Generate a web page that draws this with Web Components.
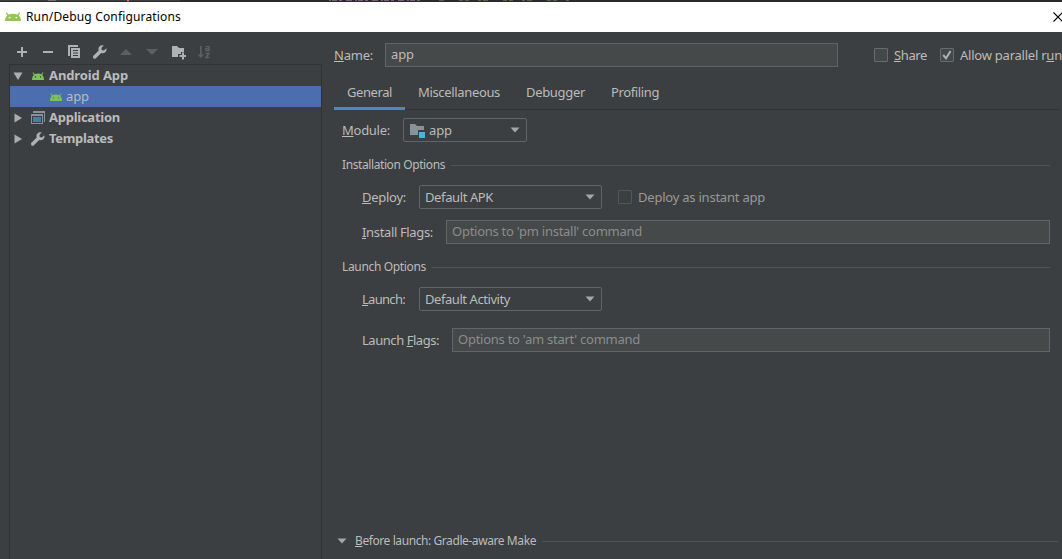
<!DOCTYPE html>
<html lang="en">
<head>
<meta charset="utf-8">
<title>Run/Debug Configurations</title>
<style>
  body {
    margin: 0;
    width: 1062px;
    height: 559px;
    overflow: hidden;
    background: #3c3f41;
    color: #bbbbbb;
    font: 13px/18px "Noto Sans", "Open Sans", sans-serif;
  }
</style>
</head>
<body>
<run-dialog></run-dialog>

<script>
const ICONS = {
  android: [16, 10, `<path d="M0 10C0 7.300 .8 5.200 2.400 3.800L.8.900 1.700.300 3.600 2.800C5 2.100 6.500 1.900 8 1.900S11 2.100 12.400 2.800L14.300.300 15.200.900 13.600 3.800C15.200 5.200 16 7.300 16 10Z" fill="var(--droid,#7bc257)"/><rect x="3.800" y="5.400" width="1.600" height="1.600" fill="var(--eye,#3c3f41)"/><rect x="10.600" y="5.400" width="1.600" height="1.600" fill="var(--eye,#3c3f41)"/>`],
  add: [16, 16, `<path d="M7 3h2v4h4v2H9v4H7V9H3V7h4z" fill="#afb1b3"/>`],
  remove: [16, 16, `<path d="M3 7h10v2H3z" fill="#afb1b3"/>`],
  copy: [16, 16, `<path d="M2 1h10v2H4v9H2z" fill="#afb1b3"/><path d="M5 4h9v10H5zM7 6v1h5V6zm0 2.500v1h5v-1zM7 11v1h5v-1z" fill="#afb1b3" fill-rule="evenodd"/>`],
  wrench: [16, 16, `<path d="M14.300 4.200 11.900 6.500 9.800 6.100 9.400 4 11.700 1.600C10.200 1 8.500 1.400 7.500 2.500 6.400 3.500 6.200 5.100 6.700 6.500L1.400 11.800C.8 12.500.8 13.500 1.400 14.200 2.100 14.900 3.200 14.900 3.900 14.200L9.200 9C10.600 9.600 12.200 9.300 13.300 8.200 14.500 7.100 14.800 5.600 14.300 4.200Z" fill="#afb1b3"/>`],
  up: [16, 16, `<path d="M8 5l6 6H2z" fill="#5e6060"/>`],
  down: [16, 16, `<path d="M2 5h12l-6 6z" fill="#5e6060"/>`],
  folderAdd: [16, 16, `<path d="M2 2h5l2 2h5v4h-3v2H8v3H2z" fill="#afb1b3"/><path d="M12 8.500h2v2.500h2v2h-2v2.500h-2V13H9.500v-2H12z" fill="#afb1b3"/>`],
  sort: [16, 16, `<path d="M4 2h1.600v8.500H8L4.800 14 1.600 10.500H4z" fill="#5e6060"/><path d="M9.700 2.700h3.300v4H9.900V4.700H13M9.500 9.500H13L9.900 13.500h3.500" fill="none" stroke="#5e6060" stroke-width="1.300"/>`],
  window: [16, 16, `<path d="M3 1h12v11h-1V3H3z" fill="#87939a"/><path d="M1 4h12v10H1zM2 6v7h10V6z" fill="#87939a" fill-rule="evenodd"/><path d="M3 7h8v5H3z" fill="#3e86a0"/>`],
  module: [16, 16, `<path d="M1 2h5l2 2h7v4H9v5H1z" fill="#87939a"/><path d="M10 10h6v6h-6z" fill="#40b6e0"/>`],
  arrowDown: [10, 6, `<path d="M.5.500h9L5 5.500z" fill="#a4a6a8"/>`],
  expanded: [10, 8, `<path d="M.5.500h9L5 8z" fill="#adadad"/>`],
  collapsed: [8, 10, `<path d="M.5.500 8 5 .5 9.500z" fill="#adadad"/>`],
  check: [14, 14, `<path d="M3.200 7 6 10.300 10.600 3" fill="none" stroke="#afb1b3" stroke-width="2"/>`],
  close: [10, 10, `<path d="M.5.500l9 9M9.500.500l-9 9" fill="none" stroke="#000" stroke-width="1.100"/>`]
};

class UiIcon extends HTMLElement {
  connectedCallback() {
    const [w, h, body] = ICONS[this.getAttribute("name")];
    const width = this.getAttribute("w") || w;
    const height = this.getAttribute("h") || h;
    this.attachShadow({ mode: "open" }).innerHTML = `
      <style>
        :host { display: block; flex: none; }
        svg { display: block; }
      </style>
      <svg width="${width}" height="${height}" viewBox="0 0 ${w} ${h}" preserveAspectRatio="none">${body}</svg>
    `;
  }
}

// Text that is tracked to take up a given width
class UiText extends HTMLElement {
  connectedCallback() {
    this.attachShadow({ mode: "open" }).innerHTML = `
      <style>
        :host { display: block; flex: none; white-space: nowrap; }
        span { display: inline-block; }
      </style>
      <span><slot></slot></span>
    `;
    const target = Number(this.getAttribute("w"));
    const span = this.shadowRoot.querySelector("span");
    const natural = span.getBoundingClientRect().width;
    if (target && natural) {
      span.style.letterSpacing = `${(target - natural) / this.textContent.length}px`;
      this.style.width = `${target}px`;
    }
  }
}

class UiField extends HTMLElement {
  constructor() {
    super();
    this.attachShadow({ mode: "open" }).innerHTML = `
      <style>
        :host {
          display: flex;
          align-items: center;
          box-sizing: border-box;
          height: 24px;
          padding: 0 5px 2px;
          background: #45494a;
          border: 1px solid #646464;
        }
        :host([hint]) { color: #8c8c8c; }
      </style>
      <slot></slot>
    `;
  }
}

class UiCombo extends HTMLElement {
  constructor() {
    super();
    this.attachShadow({ mode: "open" }).innerHTML = `
      <style>
        :host {
          display: flex;
          align-items: center;
          justify-content: space-between;
          box-sizing: border-box;
          flex: none;
          height: 24px;
          padding: 0 6px 0 5px;
          border: 1px solid #646464;
          border-radius: 2px;
        }
        div { display: flex; align-items: center; gap: 4px; padding-bottom: 1px; }
      </style>
      <div><slot></slot></div>
      <ui-icon name="arrowDown"></ui-icon>
    `;
  }
}

class UiCheckbox extends HTMLElement {
  connectedCallback() {
    this.attachShadow({ mode: "open" }).innerHTML = `
      <style>
        :host { display: flex; align-items: center; flex: none; gap: 6px; }
        .box {
          box-sizing: border-box;
          width: 14px;
          height: 14px;
          background: #43494a;
          border: 1px solid #6b6b6b;
          border-radius: 1px;
        }
        .box ui-icon { margin: -1px; }
        :host([disabled]) { color: #999999; }
        :host([disabled]) .box { background: none; border-color: #545556; }
      </style>
      <div class="box">${this.hasAttribute("checked") ? '<ui-icon name="check"></ui-icon>' : ""}</div>
      <div class="label"><slot></slot></div>
    `;
  }
}

class SectionTitle extends HTMLElement {
  constructor() {
    super();
    this.attachShadow({ mode: "open" }).innerHTML = `
      <style>
        :host { display: flex; align-items: center; gap: 6px; height: 18px; font-size: 12px; }
        .line { flex: 1; height: 1px; background: #515355; }
      </style>
      <slot></slot>
      <div class="line"></div>
    `;
  }
}

class TreeRow extends HTMLElement {
  connectedCallback() {
    this.attachShadow({ mode: "open" }).innerHTML = `
      <style>
        :host { display: flex; align-items: center; height: 21px; font-weight: bold; }
        :host([selected]) { background: #4b6eaf; font-weight: normal; --eye: #4b6eaf; }
        .arrow { display: flex; justify-content: center; width: 16px; flex: none; }
        .icon { display: flex; justify-content: center; width: 16px; margin: 0 3px 0 4px; }
        .label { padding-bottom: 2px; }
        :host([selected]) .icon { margin: 0 1px 0 22px; }
        :host([selected]) .label { padding: 0 0 1px 1px; }
      </style>
      <div class="arrow"><slot name="arrow"></slot></div>
      <div class="icon"><slot name="icon"></slot></div>
      <div class="label"><slot></slot></div>
    `;
  }
}

class TitleBar extends HTMLElement {
  constructor() {
    super();
    this.attachShadow({ mode: "open" }).innerHTML = `
      <style>
        :host {
          display: flex;
          align-items: center;
          height: 30px;
          padding-left: 5px;
          background: #fff;
          color: #000;
          font-size: 12px;
          --eye: #fff;
          --droid: #97c159;
        }
        ui-text { margin-left: 5px; }
        .droid { padding-bottom: 2px; }
        .close { margin-left: auto; margin-right: -1px; padding-bottom: 1px; }
      </style>
      <ui-icon class="droid" name="android" h="9"></ui-icon>
      <ui-text w="155">Run/Debug Configurations</ui-text>
      <ui-icon class="close" name="close"></ui-icon>
    `;
  }
}

class ConfigTree extends HTMLElement {
  constructor() {
    super();
    this.attachShadow({ mode: "open" }).innerHTML = `
      <style>
        :host { display: flex; flex-direction: column; width: 313px; margin-left: 9px; flex: none; }
        .toolbar { display: flex; align-items: center; gap: 10px; height: 32px; padding: 8px 0 0 5px; box-sizing: border-box; }
        .tree { flex: 1; border: solid #323232; border-width: 1px 1px 0; }
      </style>
      <div class="toolbar">
        <ui-icon name="add"></ui-icon>
        <ui-icon name="remove"></ui-icon>
        <ui-icon name="copy"></ui-icon>
        <ui-icon name="wrench"></ui-icon>
        <ui-icon name="up"></ui-icon>
        <ui-icon name="down"></ui-icon>
        <ui-icon name="folderAdd"></ui-icon>
        <ui-icon name="sort"></ui-icon>
      </div>
      <div class="tree">
        <tree-row>
          <ui-icon slot="arrow" name="expanded"></ui-icon>
          <ui-icon slot="icon" name="android" w="12" h="8"></ui-icon>
          <ui-text w="79">Android App</ui-text>
        </tree-row>
        <tree-row selected>
          <ui-icon slot="icon" name="android" w="12" h="8"></ui-icon>
          <ui-text w="23">app</ui-text>
        </tree-row>
        <tree-row>
          <ui-icon slot="arrow" name="collapsed"></ui-icon>
          <ui-icon slot="icon" name="window"></ui-icon>
          <ui-text w="71">Application</ui-text>
        </tree-row>
        <tree-row>
          <ui-icon slot="arrow" name="collapsed"></ui-icon>
          <ui-icon slot="icon" name="wrench"></ui-icon>
          <ui-text w="64">Templates</ui-text>
        </tree-row>
      </div>
    `;
  }
}

class ConfigForm extends HTMLElement {
  constructor() {
    super();
    this.attachShadow({ mode: "open" }).innerHTML = `
      <style>
        :host { display: flex; flex-direction: column; flex: 1; min-width: 0; padding: 11px 0 9px 12px; box-sizing: border-box; }
        u { text-decoration: underline 1px; text-underline-offset: 1px; text-decoration-skip-ink: none; }
        .row { display: flex; align-items: center; height: 24px; }
        .row > ui-text { padding-bottom: 1px; }
        .name ui-field { width: 453px; box-sizing: border-box; margin: 0 36px 0 12px; flex: none; }
        .name ui-checkbox + ui-checkbox { margin-left: 13px; }
        .tabs { display: flex; height: 34px; margin: 9px 2px 0 0; box-shadow: inset 0 -1px #323232; }
        .tab { display: flex; align-items: center; padding: 0 13px 2px; }
        .tab.active { border-bottom: 3px solid #4a88c7; padding: 1px 13px 0; box-sizing: border-box; }
        .general { padding: 8px 12px 0 8px; }
        .opt { padding-left: 20px; margin-top: 11px; }
        .opt ui-field { flex: 1; }
        section-title { margin-top: 14px; }
        .before { display: flex; align-items: center; margin: auto 4px 0 3px; gap: 8px; }
        .before section-title { flex: 1; margin: 0; }
      </style>
      <div class="row name">
        <ui-text w="39"><u>N</u>ame:</ui-text>
        <ui-field><ui-text w="23">app</ui-text></ui-field>
        <ui-checkbox><ui-text w="33"><u>S</u>hare</ui-text></ui-checkbox>
        <ui-checkbox checked><ui-text w="102">Allow parallel r<u>u</u>n</ui-text></ui-checkbox>
      </div>
      <div class="tabs">
        <div class="tab active"><ui-text w="45">General</ui-text></div>
        <div class="tab"><ui-text w="82">Miscellaneous</ui-text></div>
        <div class="tab"><ui-text w="59">Debugger</ui-text></div>
        <div class="tab"><ui-text w="48">Profiling</ui-text></div>
      </div>
      <div class="general">
        <div class="row">
          <ui-text w="48"><u>M</u>odule:</ui-text>
          <ui-combo style="width:124px;margin-left:13px">
            <ui-icon name="module"></ui-icon><ui-text w="23">app</ui-text>
          </ui-combo>
        </div>
        <section-title><ui-text w="103">Installation Options</ui-text></section-title>
        <div class="row opt">
          <ui-text w="44"><u>D</u>eploy:</ui-text>
          <ui-combo style="width:183px;margin:0 16px 0 13px"><ui-text w="68">Default APK</ui-text></ui-combo>
          <ui-checkbox disabled><ui-text w="127">Deploy as instant app</ui-text></ui-checkbox>
        </div>
        <div class="row opt">
          <ui-text w="71"><u>I</u>nstall Flags:</ui-text>
          <ui-field hint style="margin-left:13px"><ui-text w="190">Options to 'pm install' command</ui-text></ui-field>
        </div>
        <section-title><ui-text w="84">Launch Options</ui-text></section-title>
        <div class="row opt">
          <ui-text w="43"><u>L</u>aunch:</ui-text>
          <ui-combo style="width:183px;margin-left:14px"><ui-text w="85">Default Activity</ui-text></ui-combo>
        </div>
        <div class="row opt" style="margin-top:17px">
          <ui-text w="77">Launch <u>F</u>lags:</ui-text>
          <ui-field hint style="margin-left:13px"><ui-text w="182">Options to 'am start' command</ui-text></ui-field>
        </div>
      </div>
      <div class="before">
        <ui-icon name="arrowDown"></ui-icon>
        <section-title><ui-text w="181"><u>B</u>efore launch: Gradle-aware Make</ui-text></section-title>
      </div>
    `;
  }
}

class RunDialog extends HTMLElement {
  constructor() {
    super();
    this.attachShadow({ mode: "open" }).innerHTML = `
      <style>
        :host { display: flex; flex-direction: column; height: 559px; }
        .editor { display: block; height: 2px; background: #2b2b2b; }
        main { display: flex; flex: 1; min-height: 0; }
      </style>
      <!-- bottom edge of the editor line behind the dialog -->
      <svg class="editor" width="1062" height="2">
        <path d="M0 .5h180" stroke="#3c3f41"/>
        <path d="M48 .5h8" stroke="#77706c"/>
        <path d="M127 .5h2" stroke="#e06c6c" stroke-width="2"/>
        <path d="M329 .5h91" stroke="#75607a" stroke-dasharray="2 1 5 2 3 4 6 3"/>
        <path d="M439 .5h132" stroke="#4f6643" stroke-dasharray="5 15 4 2 4 9 3 2"/>
      </svg>
      <title-bar></title-bar>
      <main>
        <config-tree></config-tree>
        <config-form></config-form>
      </main>
    `;
  }
}

customElements.define("ui-icon", UiIcon);
customElements.define("ui-text", UiText);
customElements.define("ui-field", UiField);
customElements.define("ui-combo", UiCombo);
customElements.define("ui-checkbox", UiCheckbox);
customElements.define("section-title", SectionTitle);
customElements.define("tree-row", TreeRow);
customElements.define("title-bar", TitleBar);
customElements.define("config-tree", ConfigTree);
customElements.define("config-form", ConfigForm);
customElements.define("run-dialog", RunDialog);
</script>
</body>
</html>
